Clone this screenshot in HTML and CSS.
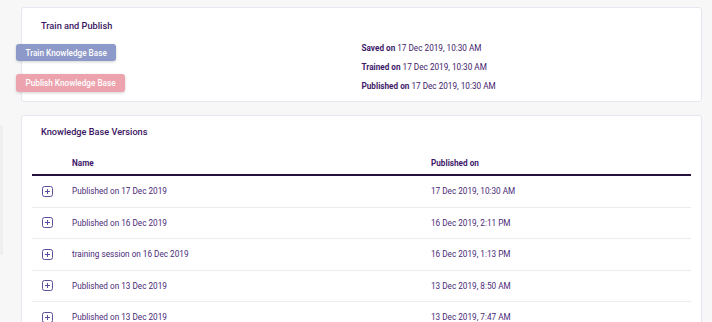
FILE: index.html
```html
<!DOCTYPE html>
<html>
<head>
<meta charset="utf-8">
<link rel="stylesheet" href="styles.css">
</head>
<body>
<div class="page">
  <div class="stub"></div>
  <main class="main">
    <section class="card card-train">
      <h2 class="card-title">Train and Publish</h2>
      <div class="train-body">
        <div class="btns">
          <button class="btn btn-train">Train Knowledge Base</button>
          <button class="btn btn-publish">Publish Knowledge Base</button>
        </div>
        <div class="status">
          <div class="status-line"><b>Saved on</b> 17 Dec 2019, 10:30 AM</div>
          <div class="status-line"><b>Trained on</b> 17 Dec 2019, 10:30 AM</div>
          <div class="status-line"><b>Published on</b> 17 Dec 2019, 10:30 AM</div>
        </div>
      </div>
    </section>
    <section class="card card-versions">
      <h2 class="card-title">Knowledge Base Versions</h2>
      <div class="table">
        <div class="row head">
          <div></div><div>Name</div><div>Published on</div>
        </div>
        <div class="row">
          <div><svg class="plus" viewBox="0 0 11 11"><rect x="0.5" y="0.5" width="10" height="10" rx="2"/><path d="M5.5 3v5M3 5.5h5"/></svg></div>
          <div>Published on 17 Dec 2019</div><div>17 Dec 2019, 10:30 AM</div>
        </div>
        <div class="row">
          <div><svg class="plus" viewBox="0 0 11 11"><rect x="0.5" y="0.5" width="10" height="10" rx="2"/><path d="M5.5 3v5M3 5.5h5"/></svg></div>
          <div>Published on 16 Dec 2019</div><div>16 Dec 2019, 2:11 PM</div>
        </div>
        <div class="row">
          <div><svg class="plus" viewBox="0 0 11 11"><rect x="0.5" y="0.5" width="10" height="10" rx="2"/><path d="M5.5 3v5M3 5.5h5"/></svg></div>
          <div>training session on 16 Dec 2019</div><div>16 Dec 2019, 1:13 PM</div>
        </div>
        <div class="row">
          <div><svg class="plus" viewBox="0 0 11 11"><rect x="0.5" y="0.5" width="10" height="10" rx="2"/><path d="M5.5 3v5M3 5.5h5"/></svg></div>
          <div>Published on 13 Dec 2019</div><div>13 Dec 2019, 8:50 AM</div>
        </div>
        <div class="row">
          <div><svg class="plus" viewBox="0 0 11 11"><rect x="0.5" y="0.5" width="10" height="10" rx="2"/><path d="M5.5 3v5M3 5.5h5"/></svg></div>
          <div>Published on 13 Dec 2019</div><div>13 Dec 2019, 7:47 AM</div>
        </div>
      </div>
    </section>
  </main>
</div>
</body>
</html>
```
FILE: styles.css
```css
html, body {
  margin: 0;
  padding: 0;
  background: #f7f7f8;
  font-family: Roboto, "Liberation Sans", sans-serif;
  color: #4a2a78;
  height: 322px;
  overflow: hidden;
}
.page {
  display: flex;
  align-items: flex-start;
}
.stub {
  width: 3px;
  height: 130px;
  margin-top: 125px;
  background: #efeff2;
  flex: none;
}
.main {
  flex: 1;
  margin-left: 18px;
  margin-right: 10px;
  padding-top: 7px;
}
.card {
  background: #fff;
  border: 1px solid #e4e7ef;
  border-radius: 3px;
  box-sizing: border-box;
}
.card-train {
  height: 95px;
}
.card-title {
  margin: 0;
  padding-left: 19px;
  font-size: 9.2px;
  line-height: 12px;
  font-weight: 500;
  color: #3a1462;
}
.card-train .card-title {
  padding-top: 12px;
}
.train-body {
  display: grid;
  grid-template-columns: 1fr 1fr;
  margin-top: 6px;
}
.btns {
  display: flex;
  flex-direction: column;
  align-items: flex-start;
  gap: 13px;
  margin-left: -6px;
  margin-top: 6px;
}
.btn {
  border: none;
  border-radius: 3px;
  color: #fff;
  font-family: Roboto, "Liberation Sans", sans-serif;
  font-size: 8.2px;
  font-weight: 500;
  padding: 0 9.5px;
  height: 17px;
  box-shadow: 0 1px 3px rgba(0,0,0,0.18);
}
.btn-train {
  background: #8d99c8;
}
.btn-publish {
  background: #eca3ad;
  height: 18px;
}
.status {
  font-size: 8.2px;
  line-height: 19px;
  color: #3f1a6a;
  padding-top: 1px;
}
.status b {
  font-weight: 700;
}
.card-versions {
  margin-top: 13px;
  height: 220px;
  padding: 0 10px;
}
.card-versions .card-title {
  padding-top: 10px;
  padding-left: 9px;
}
.table {
  margin-top: 13px;
}
.row {
  display: grid;
  grid-template-columns: 40px 359px 1fr;
  align-items: center;
  height: 30.5px;
  border-bottom: 1px solid #ebebf0;
  font-size: 8.2px;
  color: #4a2a78;
}
.row > div:first-child {
  display: flex;
  align-items: center;
  padding-left: 10px;
}
.row.head {
  height: 23px;
  border-bottom: 2px solid #25103f;
  font-weight: 700;
  color: #3f1a6a;
}
.plus {
  width: 11px;
  height: 11px;
  fill: none;
  stroke: #5a4d9c;
  stroke-width: 1;
}
```
